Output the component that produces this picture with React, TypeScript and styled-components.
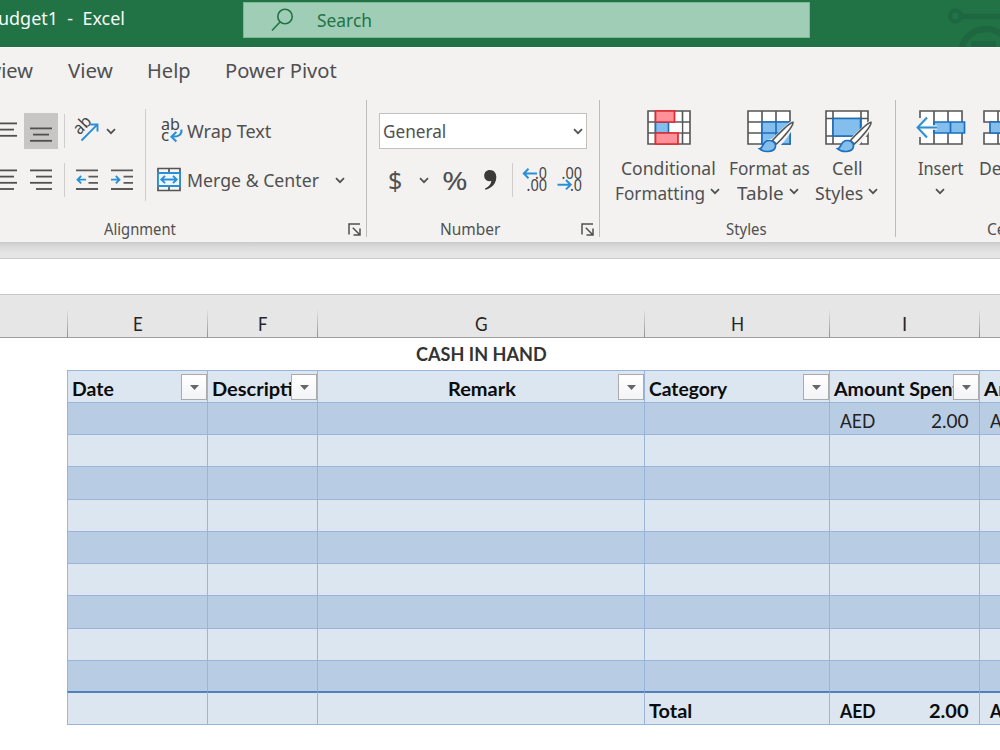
import React, { useLayoutEffect, useRef, useState } from "react";
import styled, { createGlobalStyle, css } from "styled-components";

const UI_FONT = `"Noto Sans", "Open Sans", sans-serif`;
const SHEET_FONT = `Lato, "Noto Sans", sans-serif`;
const INK = "#505050";
const BLUE = "#2b8fd6";
const DEEP = "#1a6fbf";
const SKY = "#83beec";

const GlobalStyle = createGlobalStyle`
  *, *::before, *::after { box-sizing: border-box; }
  html, body { margin: 0; padding: 0; }
  body { width: 1000px; height: 750px; overflow: hidden; background: #fff; font-family: ${UI_FONT}; }
  svg { display: block; flex: none; overflow: visible; }
`;

/* ---------- text that condenses to a given width ---------- */

const FitBox = styled.span<{ $w: number; $size: number; $lh: number; $ml: number; $color: string; $bold?: boolean; $sheet?: boolean }>`
  display: block;
  flex: none;
  width: ${(p) => p.$w}px;
  height: ${(p) => p.$lh}px;
  line-height: ${(p) => p.$lh}px;
  margin-left: ${(p) => p.$ml}px;
  font-size: ${(p) => p.$size}px;
  color: ${(p) => p.$color};
  font-weight: ${(p) => (p.$bold ? 700 : 400)};
  font-family: ${(p) => (p.$sheet ? SHEET_FONT : UI_FONT)};
`;
const FitInner = styled.span`
  display: inline-block;
  white-space: pre;
  transform-origin: 0 50%;
`;

type FitProps = { children: string; w: number; size: number; lh?: number; ml?: number; color?: string; bold?: boolean; sheet?: boolean };

function Fit({ children, w, size, lh = 24, ml = 0, color = INK, bold, sheet }: FitProps) {
  const ref = useRef<HTMLSpanElement>(null);
  const [scale, setScale] = useState(1);
  useLayoutEffect(() => {
    if (ref.current) setScale(w / ref.current.offsetWidth);
  }, [w, size, children]);
  return (
    <FitBox $w={w} $size={size} $lh={lh} $ml={ml} $color={color} $bold={bold} $sheet={sheet}>
      <FitInner ref={ref} style={{ transform: `scaleX(${scale})` }}>{children}</FitInner>
    </FitBox>
  );
}

/* ---------- frame ---------- */

const Window = styled.div`
  width: 1000px;
  height: 750px;
  overflow: hidden;
  display: flex;
  flex-direction: column;
  background: #fff;
`;
const TitleBar = styled.header`
  height: 47px;
  flex: none;
  display: flex;
  align-items: flex-start;
  background: #217346;
  overflow: hidden;
`;
const TitleText = styled.div`
  width: 243px;
  padding-top: 6px;
`;
const SearchBox = styled.div`
  width: 568px;
  height: 36px;
  margin-top: 2px;
  display: flex;
  align-items: center;
  padding-left: 28px;
  background: #a0cdb5;
  border: 1px solid #7db894;
`;
const Decoration = styled.div`
  margin-left: 137px;
`;
const Tabs = styled.nav`
  height: 48px;
  flex: none;
  display: flex;
  padding-top: 9px;
  background: #f3f2f1;
  border-top: 1px solid #fafafa;
`;
const Ribbon = styled.section`
  height: 147px;
  flex: none;
  display: flex;
  padding-top: 5px;
  background: #f3f2f1;
  overflow: hidden;
`;
const Group = styled.div<{ $w: number }>`
  width: ${(p) => p.$w}px;
  height: 137px;
  flex: none;
  display: flex;
  flex-direction: column;
  border-right: 1px solid #bdbcbb;
`;
const GroupBody = styled.div`
  height: 119px;
  flex: none;
  display: flex;
`;
const Caption = styled.div`
  height: 20px;
  flex: none;
  display: flex;
  align-items: center;
`;
const Gap = styled.span<{ $w: number }>`
  width: ${(p) => p.$w}px;
  flex: none;
`;
const Stack = styled.div<{ $w: number }>`
  width: ${(p) => p.$w}px;
  flex: none;
  padding-top: 13px;
`;
const ToolRow = styled.div`
  height: 36px;
  margin-bottom: 13px;
  display: flex;
  align-items: center;
`;
const PressedButton = styled.div`
  width: 34px;
  height: 36px;
  margin-left: 6px;
  display: flex;
  align-items: center;
  justify-content: center;
  background: #c8c6c4;
`;
const Rule = styled.span<{ $h: number; $ml: number; $mt?: number }>`
  width: 1px;
  height: ${(p) => p.$h}px;
  margin-left: ${(p) => p.$ml}px;
  margin-top: ${(p) => p.$mt ?? 0}px;
  flex: none;
  background: #cfcecd;
`;
const Combo = styled.div`
  width: 208px;
  height: 36px;
  margin-left: 12px;
  display: flex;
  align-items: center;
  background: #fff;
  border: 1px solid #c2c1c0;
`;
const BigButton = styled.div<{ $w: number; $ml: number }>`
  width: ${(p) => p.$w}px;
  margin-left: ${(p) => p.$ml}px;
  flex: none;
  display: flex;
  flex-direction: column;
  align-items: center;
  padding-top: 10px;
`;
const BigIcon = styled.div<{ $flush?: boolean }>`
  height: 45px;
  padding-left: ${(p) => (p.$flush ? 0 : 2)}px;
`;
const BigLine = styled.div<{ $arrow?: boolean }>`
  height: 25px;
  display: flex;
  align-items: center;
  padding-right: ${(p) => (p.$arrow ? 2 : 0)}px;
`;
const RibbonShadow = styled.div`
  height: 17px;
  flex: none;
  background: linear-gradient(#cbcbcb, #dcdcdc 35%, #e6e6e6 75%);
  border-bottom: 1px solid #c9c9c9;
`;
const FormulaBar = styled.div`
  height: 36px;
  flex: none;
  background: #fff;
  border-bottom: 1px solid #c9c9c9;
`;

/* ---------- sheet ---------- */

const columns = "67px 140px 110px 327px 185px 150px 21px";

const ColumnHeads = styled.div`
  height: 43px;
  flex: none;
  display: grid;
  grid-template-columns: ${columns};
  background: #e6e6e6;
  border-bottom: 1px solid #9d9d9d;
`;
const ColumnHead = styled.div<{ $first?: boolean }>`
  display: flex;
  justify-content: center;
  padding-top: 17px;
  padding-left: 1px;
  ${(p) =>
    !p.$first &&
    css`
      background: linear-gradient(#e0e0e0, #8f8f8f) left 15px / 1px 28px no-repeat;
    `}
`;
const TitleRow = styled.div`
  height: 32px;
  flex: none;
  padding: 4px 0 0 416px;
`;
const SheetRow = styled.div<{ $h: number }>`
  height: ${(p) => p.$h}px;
  flex: none;
  display: grid;
  grid-template-columns: ${columns};
`;
const Cell = styled.div<{ $tone: "dark" | "light"; $total?: boolean }>`
  display: flex;
  align-items: flex-start;
  overflow: hidden;
  background: ${(p) => (p.$tone === "dark" ? "#b8cce4" : "#dce6f1")};
  border-left: 1px solid #9ab5d9;
  border-top: ${(p) => (p.$total ? "2px solid #4f81bd" : "1px solid #9ab5d9")};
  border-bottom: ${(p) => (p.$total ? "1px solid #9ab5d9" : "0")};
`;
const CellText = styled.div<{ $pad: number; $top: number }>`
  flex: 1;
  min-width: 0;
  overflow: hidden;
  display: flex;
  padding-left: ${(p) => p.$pad}px;
  padding-top: ${(p) => p.$top}px;
`;
const FilterButton = styled.div`
  width: 26px;
  height: 26px;
  margin: 3px 0 0 0;
  flex: none;
  display: flex;
  align-items: center;
  justify-content: center;
  background: linear-gradient(#fff, #f3f4f7);
  border: 1px solid #ababab;
`;

/* ---------- icons ---------- */

const ChevronBox = styled.span<{ $ml: number; $mt: number }>`
  margin-left: ${(p) => p.$ml}px;
  margin-top: ${(p) => p.$mt}px;
  flex: none;
`;
const Chevron = ({ ml = 0, mt = 0 }: { ml?: number; mt?: number }) => (
  <ChevronBox $ml={ml} $mt={mt}>
    <svg width="10" height="7" viewBox="0 0 10 7" fill="none" stroke="#505050" strokeWidth="1.7">
      <path d="M1 1.2 5 5.2 9 1.2" />
    </svg>
  </ChevronBox>
);

const Lines = ({ w, rows, h, top = 0 }: { w: number; h: number; top?: number; rows: [number, number][] }) => (
  <svg width={w} height={h} stroke="#505050" strokeWidth="1.8">
    {rows.map(([a, b], i) => (
      <path key={i} d={`M${a} ${top + 0.4 + i * 6.2}H${b}`} />
    ))}
  </svg>
);

const Indent = ({ right }: { right?: boolean }) => (
  <svg width="22" height="20" fill="none" stroke="#5a5a5a" strokeWidth="1.8">
    <path d="M0 0.400H22M12.500 6.600H22M12.500 12.800H22M0 19H22" />
    <path stroke={BLUE} d={right ? "M0 9.700H8.500M4.800 6 8.500 9.700 4.800 13.400" : "M10 9.700H1.500M5.200 6 1.500 9.700 5.200 13.400"} />
  </svg>
);

const Orientation = () => (
  <svg width="27" height="27" viewBox="0 0 27 27" fill="none">
    <text x="0" y="0" transform="translate(5.500 17.500) rotate(-45)" fontFamily="Noto Sans" fontSize="17" fill="#444" textLength="18.500" lengthAdjust="spacingAndGlyphs">ab</text>
    <path d="M7.500 22.500 23 6.800M16.500 6.500H23.500V13.500" stroke={BLUE} strokeWidth="1.900" />
  </svg>
);

const WrapIcon = () => (
  <svg width="22" height="26" viewBox="0 0 22 26" fill="none">
    <text x="0" y="11.500" fontFamily="Noto Sans" fontSize="16" fill="#444" textLength="19" lengthAdjust="spacingAndGlyphs">ab</text>
    <text x="0" y="23" fontFamily="Noto Sans" fontSize="17" fill="#444">c</text>
    <path d="M20.300 11.500C21.300 16.500 18 18.800 11 18.800M15.300 14 10.500 18.800 15.300 23.500" stroke={BLUE} strokeWidth="2.100" />
  </svg>
);

const MergeIcon = () => (
  <svg width="24" height="24" viewBox="0 0 24 24" fill="none">
    <path d="M1 0.500H23V22.500H1ZM12 0.500V5M12 18V22.500" fill="#f6f6f6" stroke="#555" strokeWidth="1.700" />
    <path d="M1 5H23V18H1Z" fill="#eef5fb" stroke={BLUE} strokeWidth="1.800" />
    <path d="M4.500 11.500H19.500M8 7.800 4.300 11.500 8 15.200M16 7.800 19.700 11.500 16 15.200" stroke={BLUE} strokeWidth="1.900" />
  </svg>
);

const Launcher = () => (
  <svg width="13" height="13" viewBox="0 0 13 13" fill="none" stroke="#505050" strokeWidth="1.500">
    <path d="M1 11.500V1H12M4.800 4.800 11.500 11.500M12 5.500V12H5.500" />
  </svg>
);

const Decimals = ({ add }: { add?: boolean }) => (
  <svg width="25" height="28" viewBox="0 0 25 28" fill="none">
    <g fontFamily="Noto Sans" fontSize="15.500" fill="#444">
      {add ? (
        <>
          <text x="12" y="12.500" textLength="12" lengthAdjust="spacingAndGlyphs">.0</text>
          <text x="3.500" y="25" textLength="20.500" lengthAdjust="spacingAndGlyphs">.00</text>
        </>
      ) : (
        <>
          <text x="3.500" y="12.500" textLength="20.500" lengthAdjust="spacingAndGlyphs">.00</text>
          <text x="12" y="25" textLength="12" lengthAdjust="spacingAndGlyphs">.0</text>
        </>
      )}
    </g>
    <path
      stroke={BLUE}
      strokeWidth="2"
      d={add ? "M14 7.500H1M5.500 2.800 0.800 7.500 5.500 12.200" : "M-0.500 18.700H12.500M8 14 12.700 18.700 8 23.400"}
    />
  </svg>
);

const Comma = () => (
  <svg width="13" height="20" viewBox="0 0 13 20">
    <path d="M5.800 0C9.800 0 12.300 2.800 12.300 7 12.300 13 8.500 17.800 1.500 19.800L1 18.600C5 16.800 7 14.300 7.300 10.800 6.800 11.100 6.100 11.200 5.400 11.200 2.300 11.200 0.200 8.900 0.200 5.800 0.200 2.400 2.500 0 5.800 0Z" fill="#3a3a3a" />
  </svg>
);

const Conditional = () => (
  <svg width="44" height="35" viewBox="0 0 44 35" fill="none">
    <path d="M1 1H43V34H1Z" fill="#fff" />
    <path d="M1 1H43V34H1ZM8.500 1V34M35.500 1V34M1 12H43M1 23H43" stroke="#555" strokeWidth="1.600" />
    <path d="M22.500 12.900H34.700V22.200H22.500Z" fill="#fff" />
    <path d="M8.500 12.200H21.500V23H8.500Z" fill={SKY} stroke={DEEP} strokeWidth="1.600" />
    <path d="M8.500 1H27.500V12H8.500ZM8.500 23H31V34H8.500Z" fill="#ff9299" stroke="#e8262b" strokeWidth="1.700" />
  </svg>
);

const Brush = () => (
  <g>
    <path d="M46.500 11.500C43 13 30 26 25.500 30.500 20 29.500 18 34 16 38.500 14 40 11.500 40.500 11.500 40.500 17 44 28 43 31 36 36 31 46 19 46.500 11.500Z" fill="#f3f2f1" stroke="#f3f2f1" strokeWidth="3" />
    <path d="M46 12.300C43 12.500 31 24 25.500 30.500L29.500 34C36 28 46.500 16 46 12.300Z" fill="#fff" stroke="#555" strokeWidth="1.600" />
    <path d="M12.500 38.700C16.500 38.500 15 32.500 20 30.800 24.500 29.500 29 32.500 28.500 36.500 27.500 42.500 17 43 12.500 38.700Z" fill={SKY} stroke={DEEP} strokeWidth="1.600" />
  </g>
);

const FormatTable = () => (
  <svg width="46" height="43" viewBox="0 0 46 43" fill="none">
    <path d="M1 1H43V34H1Z" fill="#fff" />
    <path d="M1 1H43V34H1ZM15 1V34M29 1V34M1 12H43M1 23H43" stroke="#555" strokeWidth="1.600" />
    <path d="M15 12H43V34H15ZM29 12V34M15 23H43" fill={SKY} stroke={DEEP} strokeWidth="1.600" />
    <Brush />
  </svg>
);

const CellStyles = () => (
  <svg width="46" height="43" viewBox="0 0 46 43" fill="none">
    <path d="M1 1H43V34H1Z" fill="#fff" />
    <path d="M1 1H43V34H1ZM8 1V34M36 1V34M1 8.500H43M1 26H43" stroke="#555" strokeWidth="1.600" />
    <path d="M8 8.500H35.500V26H8Z" fill={SKY} stroke={DEEP} strokeWidth="1.600" />
    <Brush />
  </svg>
);

const InsertIcon = () => (
  <svg width="49" height="35" viewBox="0 0 49 35" fill="none">
    <path d="M4 1H46V34H4Z" fill="#fff" />
    <path d="M4 1H46V34H4ZM18 1V34M32 1V34" stroke="#555" strokeWidth="1.600" />
    <path d="M0 8 7 8V27L0 27Z" fill="#f3f2f1" />
    <path d="M18 12H48.500V23H18ZM34.500 12V23" fill={SKY} stroke={DEEP} strokeWidth="1.700" />
    <path d="M21 17.500H2M11 7.500 1.500 17.500 11 27.500" stroke="#f3f2f1" strokeWidth="4.500" />
    <path d="M21 17.500H2M11 7.500 1.500 17.500 11 27.500" stroke={BLUE} strokeWidth="1.900" />
  </svg>
);

const DeleteIcon = () => (
  <svg width="47" height="35" viewBox="0 0 47 35" fill="none">
    <path d="M1 1H43V12H1ZM1 23H43V34H1ZM15 1V34" fill="#fff" stroke="#555" strokeWidth="1.600" />
    <path d="M7 12H43V23H7Z" fill={SKY} stroke={DEEP} strokeWidth="1.700" />
  </svg>
);

const Circuit = () => (
  <svg width="53" height="47" viewBox="0 0 53 47" fill="none" stroke="#1e6741">
    <circle cx="8.500" cy="16" r="5.500" strokeWidth="4.200" />
    <path d="M14 16.500H53" strokeWidth="5.500" />
    <circle cx="39" cy="54" r="25" strokeWidth="6.500" />
    <path d="M24 44H49" strokeWidth="6" />
  </svg>
);

const Magnifier = () => (
  <svg width="22" height="23" viewBox="0 0 22 23" fill="none" stroke="#217346" strokeWidth="1.600">
    <circle cx="13" cy="7.500" r="7.200" />
    <path d="M8 13 0 21.500" />
  </svg>
);

/* ---------- data ---------- */

const heads: { letter: string; w: number }[] = [
  { letter: "E", w: 10 },
  { letter: "F", w: 9 },
  { letter: "G", w: 13 },
  { letter: "H", w: 13 },
  { letter: "I", w: 5 },
];
const tableHeads: { label: string; w: number; pad: number; filter: boolean }[] = [
  { label: "Date", w: 42, pad: 4, filter: true },
  { label: "Description", w: 104, pad: 4, filter: true },
  { label: "Remark", w: 68, pad: 130, filter: true },
  { label: "Category", w: 78, pad: 4, filter: true },
  { label: "Amount Spent", w: 126, pad: 4, filter: true },
  { label: "Amount", w: 74, pad: 4, filter: false },
];
const bodyHeights = [32, 32, 33, 32, 32, 32, 33, 32, 31];

const Amount = ({ bold, top }: { bold?: boolean; top: number }) => (
  <CellText $pad={10} $top={top}>
    <Fit sheet w={bold ? 36 : 35} size={18.5} bold={bold} color={bold ? "#0c0c0c" : "#222"}>AED</Fit>
    <Fit sheet w={bold ? 40 : 38} ml={bold ? 53 : 56} size={18.5} bold={bold} color={bold ? "#0c0c0c" : "#222"}>2.00</Fit>
  </CellText>
);

export default function App() {
  return (
    <Window>
      <GlobalStyle />
      <TitleBar>
        <TitleText>
          <Fit w={127} ml={-2} size={18.5} color="#f4faf6">{"udget1  -  Excel"}</Fit>
        </TitleText>
        <SearchBox>
          <Magnifier />
          <Fit w={55} ml={23} size={18} color="#217346">Search</Fit>
        </SearchBox>
        <Decoration><Circuit /></Decoration>
      </TitleBar>

      <Tabs>
        <Fit w={42} ml={-9} size={20.5} lh={26}>view</Fit>
        <Fit w={45} ml={35} size={20.5} lh={26}>View</Fit>
        <Fit w={44} ml={34} size={20.5} lh={26}>Help</Fit>
        <Fit w={112} ml={34} size={20.5} lh={26}>Power Pivot</Fit>
      </Tabs>

      <Ribbon>
        <Group $w={367}>
          <GroupBody>
            <Stack $w={145}>
              <ToolRow>
                <Lines w={18} h={16} rows={[[0, 17], [0, 14], [0, 17]]} />
                <PressedButton><Lines w={22} h={14} top={4} rows={[[0, 22], [3, 19], [0, 22]]} /></PressedButton>
                <Rule $h={34} $ml={6} />
                <Gap $w={9} />
                <Orientation />
                <Chevron ml={5} />
              </ToolRow>
              <ToolRow>
                <Lines w={18} h={20} rows={[[0, 17], [0, 14], [0, 17], [0, 14]]} />
                <Gap $w={12} />
                <Lines w={22} h={20} rows={[[0, 22], [6, 22], [0, 22], [6, 22]]} />
                <Rule $h={34} $ml={12} />
                <Gap $w={11} />
                <Indent />
                <Gap $w={12.5} />
                <Indent right />
              </ToolRow>
            </Stack>
            <Rule $h={92} $ml={0} $mt={9} />
            <Stack $w={220}>
              <ToolRow>
                <Gap $w={15} />
                <WrapIcon />
                <Fit w={84} ml={4} size={18.5}>Wrap Text</Fit>
              </ToolRow>
              <ToolRow>
                <Gap $w={11} />
                <MergeIcon />
                <Fit w={132} ml={6} size={18.5}>Merge &amp; Center</Fit>
                <Chevron ml={16} />
              </ToolRow>
            </Stack>
          </GroupBody>
          <Caption>
            <Fit w={72} ml={104} size={16}>Alignment</Fit>
            <Gap $w={172} />
            <Launcher />
          </Caption>
        </Group>

        <Group $w={233}>
          <GroupBody>
            <Stack $w={232}>
              <ToolRow>
                <Combo>
                  <Fit w={63} ml={3} size={18.5}>General</Fit>
                  <Chevron ml={127} mt={1} />
                </Combo>
              </ToolRow>
              <ToolRow>
                <Fit w={14} ml={21} size={25} lh={36}>$</Fit>
                <Chevron ml={17} />
                <Fit w={26} ml={13} size={25} lh={36}>%</Fit>
                <Gap $w={16} />
                <Comma />
                <Rule $h={34} $ml={15} />
                <Gap $w={10} />
                <Decimals add />
                <Gap $w={10} />
                <Decimals />
              </ToolRow>
            </Stack>
          </GroupBody>
          <Caption>
            <Fit w={60} ml={72.5} size={16}>Number</Fit>
            <Gap $w={81} />
            <Launcher />
          </Caption>
        </Group>

        <Group $w={296}>
          <GroupBody>
            <BigButton $w={106} $ml={15}>
              <BigIcon><Conditional /></BigIcon>
              <BigLine><Fit w={95} size={18.5}>Conditional</Fit></BigLine>
              <BigLine $arrow><Fit w={90} size={18.5}>Formatting</Fit><Chevron ml={5} mt={-2} /></BigLine>
            </BigButton>
            <BigButton $w={82} $ml={7}>
              <BigIcon><FormatTable /></BigIcon>
              <BigLine><Fit w={81} size={18.5}>Format as</Fit></BigLine>
              <BigLine $arrow><Fit w={47} size={18.5}>Table</Fit><Chevron ml={5} mt={-2} /></BigLine>
            </BigButton>
            <BigButton $w={64} $ml={5}>
              <BigIcon><CellStyles /></BigIcon>
              <BigLine><Fit w={31} size={18.5}>Cell</Fit></BigLine>
              <BigLine $arrow><Fit w={48} size={18.5}>Styles</Fit><Chevron ml={5} mt={-2} /></BigLine>
            </BigButton>
          </GroupBody>
          <Caption><Fit w={41} ml={126} size={16}>Styles</Fit></Caption>
        </Group>

        <Group $w={180}>
          <GroupBody>
            <BigButton $w={50} $ml={19}>
              <BigIcon $flush><InsertIcon /></BigIcon>
              <BigLine><Fit w={45} size={18.5}>Insert</Fit></BigLine>
              <BigLine><Chevron mt={-2} /></BigLine>
            </BigButton>
            <BigButton $w={54} $ml={13}>
              <BigIcon><DeleteIcon /></BigIcon>
              <BigLine><Fit w={53} size={18.5}>Delete</Fit></BigLine>
              <BigLine><Chevron mt={-2} /></BigLine>
            </BigButton>
          </GroupBody>
          <Caption><Fit w={34} ml={91} size={16}>Cells</Fit></Caption>
        </Group>
      </Ribbon>

      <RibbonShadow />
      <FormulaBar />

      <ColumnHeads>
        <ColumnHead $first />
        {heads.map((h) => (
          <ColumnHead key={h.letter}>
            <Fit sheet w={h.w} size={18.5} color="#262626">{h.letter}</Fit>
          </ColumnHead>
        ))}
        <ColumnHead />
      </ColumnHeads>

      <TitleRow>
        <Fit sheet bold w={131} size={18.5} color="#333">CASH IN HAND</Fit>
      </TitleRow>

      <SheetRow $h={32}>
        <span />
        {tableHeads.map((h, i) => (
          <Cell key={i} $tone="light">
            <CellText $pad={h.pad} $top={6}>
              <Fit sheet bold w={h.w} size={18.5} color="#0c0c0c">{h.label}</Fit>
            </CellText>
            {h.filter && (
              <FilterButton>
                <svg width="9" height="5" viewBox="0 0 9 5"><path d="M0 0H9L4.500 5Z" fill="#666" /></svg>
              </FilterButton>
            )}
          </Cell>
        ))}
      </SheetRow>
      {bodyHeights.map((height, r) => (
        <SheetRow key={r} $h={height}>
          <span />
          {tableHeads.map((_, c) => (
            <Cell key={c} $tone={r % 2 ? "light" : "dark"}>
              {r === 0 && c >= 4 && <Amount top={6} />}
            </Cell>
          ))}
        </SheetRow>
      ))}
      <SheetRow $h={34}>
        <span />
        {tableHeads.map((_, c) => (
          <Cell key={c} $tone="light" $total>
            {c === 3 && (
              <CellText $pad={4} $top={6}>
                <Fit sheet bold w={43} size={18.5} color="#0c0c0c">Total</Fit>
              </CellText>
            )}
            {c >= 4 && <Amount bold top={6} />}
          </Cell>
        ))}
      </SheetRow>
    </Window>
  );
}
